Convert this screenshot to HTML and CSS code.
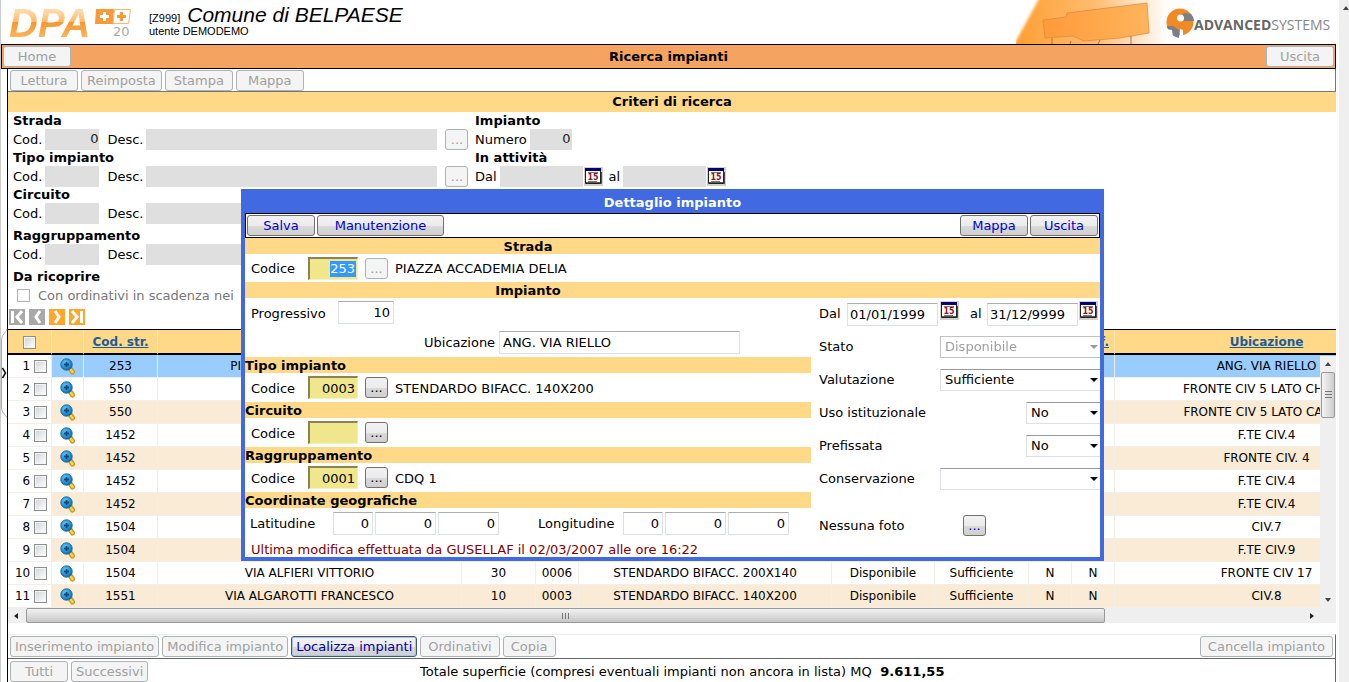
FILE: index.html
```html
<!DOCTYPE html>
<html lang="it">
<head>
<meta charset="utf-8">
<title>Ricerca impianti</title>
<link rel="stylesheet" href="styles.css">
</head>
<body>
<svg class="defs" aria-hidden="true">
  <defs>
    <radialGradient id="lens" cx=".4" cy=".35" r=".7"><stop offset="0" stop-color="#6cc6f0"/><stop offset=".6" stop-color="#2492d0"/><stop offset="1" stop-color="#0d5f9c"/></radialGradient>
    <symbol id="magnify" viewBox="0 0 16 17">
      <path d="M10.500 11l2 3" stroke="#c9971c" stroke-width="5" stroke-linecap="round"/>
      <path d="M11 12l1.500 2" stroke="#f2d35a" stroke-width="2.500" stroke-linecap="round"/>
      <circle cx="6.500" cy="6.500" r="5.700" fill="url(#lens)" stroke="#1b6fa8"/>
      <path d="M4 6.500h5M6.500 4v5" stroke="#0b4a80" stroke-width="1.800"/>
    </symbol>
    <symbol id="calendar" viewBox="0 0 19 19">
      <path d="M0 0h19v19H0z" fill="#d4d0c8"/>
      <path d="M1.500 1.500h15v15h-15z" fill="#fff" stroke="#222"/>
      <path d="M1 1h16v3H1z" fill="#00006e"/>
      <path d="M2 16h15V5" fill="none" stroke="#222" stroke-width="1.500"/>
      <path d="M4 5.500h10M4 14.500h9" stroke="#777"/>
      <text x="9" y="13" text-anchor="middle" font-family="DejaVu Sans, sans-serif" font-size="8" font-weight="bold" fill="#8b1a1a">15</text>
    </symbol>
  </defs>
</svg>

<div class="page">
  <div class="splitter" aria-hidden="true">
    <svg class="grip" width="8" height="90" viewBox="0 0 8 90"><path d="M7 0C6 4 1.500 5 1.500 12v66c0 6 4 7 5.500 11" fill="#fff" stroke="#aaa"/><path d="M2.500 39l3 5-3 5" fill="none" stroke="#111" stroke-width="1.500"/></svg>
  </div>

  <div class="main">
    <header class="brand">
      <div class="dpa">DPA</div>
      <svg class="flags" width="38" height="34" viewBox="0 0 38 34">
        <path d="M1 1h18l-1 15H0z" fill="#f79a3c"/>
        <path d="M19.500 1.500h16l-2 14H18z" fill="#fff" stroke="#f6b77a"/>
        <path d="M5 8.500h9M9.500 4v9" stroke="#fff" stroke-width="3"/>
        <path d="M22 8.500h9M26.500 4v9" stroke="#f79a3c" stroke-width="3"/>
        <text x="18" y="28" font-family="DejaVu Sans, sans-serif" font-size="13" fill="#aaa">20</text>
      </svg>
      <div class="who">
        <div><span class="small">[Z999]</span> <em>Comune di BELPAESE</em></div>
        <div class="small">utente DEMODEMO</div>
      </div>
      <svg class="banner" width="180" height="44" viewBox="0 0 180 44">
        <defs>
          <linearGradient id="sky"><stop offset="0" stop-color="#ff9d2e"/><stop offset=".45" stop-color="#ffbb70"/><stop offset=".85" stop-color="#fff"/></linearGradient>
          <linearGradient id="panel"><stop offset="0" stop-color="#ff9a3a"/><stop offset="1" stop-color="#ffb45c"/></linearGradient>
          <filter id="soft"><feGaussianBlur stdDeviation="1.500"/></filter>
        </defs>
        <path d="M25-5h155v55H-5z" fill="url(#sky)" filter="url(#soft)"/>
        <path d="M27 20l23-3 1-4 80-10 2 30-29 5-36 3-11-5-28 2z" fill="url(#panel)" stroke="#d8873c" stroke-width=".700"/>
        <path d="M36 38v6M55 41l-1 3M84 40l-2 4M115 36v8" stroke="#a87443"/>
      </svg>
      <svg class="mark" width="28" height="32" viewBox="0 0 28 32">
        <circle cx="14" cy="15" r="13.500" fill="#f08a24"/>
        <path d="M13 8c5-2 9-2 12-1 2 2 3 5 3 7H18z" fill="#7b7f86"/>
        <path d="M1 19h6l6 4v8C6 29 2 25 1 19z" fill="#7b7f86"/>
        <path d="M0 22l6 1 1 7-7 2z" fill="#fff"/>
        <circle cx="14.500" cy="11" r="3.500" fill="#fff"/>
        <path d="M14 22l3 1v9h-3z" fill="#fff"/>
      </svg>
      <div class="vendor"><b>ADVANCED</b>SYSTEMS</div>
    </header>

    <div class="titlebar">
      <button class="btn" disabled>Home</button>
      <h1>Ricerca impianti</h1>
      <button class="btn" disabled>Uscita</button>
    </div>

    <div class="content">
      <div class="toolbar">
        <button class="btn" disabled>Lettura</button>
        <button class="btn" disabled>Reimposta</button>
        <button class="btn" disabled>Stampa</button>
        <button class="btn" disabled>Mappa</button>
      </div>
      <h2 class="band">Criteri di ricerca</h2>

      <form class="criteria">
        <div class="crit-left">
          <fieldset>
            <legend>Strada</legend>
            <div class="line"><label for="c1">Cod.</label><input id="c1" class="w-cod num" value="0" disabled><label for="d1">Desc.</label><input id="d1" class="w-desc" disabled><button type="button" class="dots" disabled>...</button></div>
          </fieldset>
          <fieldset>
            <legend>Tipo impianto</legend>
            <div class="line"><label for="c2">Cod.</label><input id="c2" class="w-cod num" disabled><label for="d2">Desc.</label><input id="d2" class="w-desc" disabled><button type="button" class="dots" disabled>...</button></div>
          </fieldset>
          <fieldset>
            <legend>Circuito</legend>
            <div class="line"><label for="c3">Cod.</label><input id="c3" class="w-cod num" disabled><label for="d3">Desc.</label><input id="d3" class="w-desc" disabled></div>
          </fieldset>
          <fieldset class="spaced">
            <legend>Raggruppamento</legend>
            <div class="line"><label for="c4">Cod.</label><input id="c4" class="w-cod num" disabled><label for="d4">Desc.</label><input id="d4" class="w-desc" disabled></div>
          </fieldset>
          <fieldset class="spaced">
            <legend>Da ricoprire</legend>
            <div class="line"><label class="muted"><input type="checkbox" disabled>Con ordinativi in scadenza nei</label></div>
          </fieldset>
        </div>
        <div class="crit-right">
          <fieldset>
            <legend>Impianto</legend>
            <div class="line"><label for="n1">Numero</label><input id="n1" class="w-num num" value="0" disabled></div>
          </fieldset>
          <fieldset>
            <legend>In attività</legend>
            <div class="line"><label for="f1">Dal</label><input id="f1" class="w-date" disabled><svg class="cal"><use href="#calendar"/></svg><label for="f2">al</label><input id="f2" class="w-date" disabled><svg class="cal"><use href="#calendar"/></svg></div>
          </fieldset>
        </div>
      </form>

      <div class="pager">
        <button class="nav" aria-label="Prima pagina" disabled><svg width="16" height="16"><path d="M3.500 2v12M13 2L8 8l5 6" fill="none" stroke="#fff" stroke-width="3"/></svg></button>
        <button class="nav" aria-label="Pagina precedente" disabled><svg width="16" height="16"><path d="M11 2L7 8l4 6" fill="none" stroke="#fff" stroke-width="3"/></svg></button>
        <button class="nav" aria-label="Pagina successiva"><svg width="16" height="16"><path d="M6 2l4 6-4 6" fill="none" stroke="#fff" stroke-width="3"/></svg></button>
        <button class="nav" aria-label="Ultima pagina"><svg width="16" height="16"><path d="M12.500 2v12M3 2l5 6-5 6" fill="none" stroke="#fff" stroke-width="3"/></svg></button>
      </div>

      <div class="grid">
        <table>
          <colgroup><col class="k-n"><col class="k-i"><col class="k-c"><col class="k-v"><col class="k-c"><col class="k-s"><col class="k-t"><col class="k-d"><col class="k-e"><col class="k-s"><col class="k-s"><col class="k-v"></colgroup>
          <thead>
            <tr><th><input type="checkbox" aria-label="Seleziona tutti"></th><th></th><th><a href="#">Cod. str.</a></th><th></th><th></th><th></th><th></th><th></th><th></th><th></th><th><a href="#">Pref.</a></th><th><a href="#">Ubicazione</a></th></tr>
          </thead>
          <tbody>
            <tr class="selected"><td><label>1 <input type="checkbox"></label></td><td><svg class="mag"><use href="#magnify"/></svg></td><td>253</td><td>PIAZZA ACCADEMIA DELIA</td><td>10</td><td>0003</td><td>STENDARDO BIFACC. 140X200</td><td>Disponibile</td><td>Sufficiente</td><td>N</td><td>N</td><td>ANG. VIA RIELLO</td></tr>
            <tr><td><label>2 <input type="checkbox"></label></td><td><svg class="mag"><use href="#magnify"/></svg></td><td>550</td><td></td><td></td><td></td><td></td><td></td><td></td><td></td><td></td><td>FRONTE CIV 5 LATO CHIESA</td></tr>
            <tr><td><label>3 <input type="checkbox"></label></td><td><svg class="mag"><use href="#magnify"/></svg></td><td>550</td><td></td><td></td><td></td><td></td><td></td><td></td><td></td><td></td><td>FRONTE CIV 5 LATO CAMPO</td></tr>
            <tr><td><label>4 <input type="checkbox"></label></td><td><svg class="mag"><use href="#magnify"/></svg></td><td>1452</td><td></td><td></td><td></td><td></td><td></td><td></td><td></td><td></td><td>F.TE CIV.4</td></tr>
            <tr><td><label>5 <input type="checkbox"></label></td><td><svg class="mag"><use href="#magnify"/></svg></td><td>1452</td><td></td><td></td><td></td><td></td><td></td><td></td><td></td><td></td><td>FRONTE CIV. 4</td></tr>
            <tr><td><label>6 <input type="checkbox"></label></td><td><svg class="mag"><use href="#magnify"/></svg></td><td>1452</td><td></td><td></td><td></td><td></td><td></td><td></td><td></td><td></td><td>F.TE CIV.4</td></tr>
            <tr><td><label>7 <input type="checkbox"></label></td><td><svg class="mag"><use href="#magnify"/></svg></td><td>1452</td><td></td><td></td><td></td><td></td><td></td><td></td><td></td><td></td><td>F.TE CIV.4</td></tr>
            <tr><td><label>8 <input type="checkbox"></label></td><td><svg class="mag"><use href="#magnify"/></svg></td><td>1504</td><td></td><td></td><td></td><td></td><td></td><td></td><td></td><td></td><td>CIV.7</td></tr>
            <tr><td><label>9 <input type="checkbox"></label></td><td><svg class="mag"><use href="#magnify"/></svg></td><td>1504</td><td></td><td></td><td></td><td></td><td></td><td></td><td></td><td></td><td>F.TE CIV.9</td></tr>
            <tr><td><label>10 <input type="checkbox"></label></td><td><svg class="mag"><use href="#magnify"/></svg></td><td>1504</td><td>VIA ALFIERI VITTORIO</td><td>30</td><td>0006</td><td>STENDARDO BIFACC. 200X140</td><td>Disponibile</td><td>Sufficiente</td><td>N</td><td>N</td><td>FRONTE CIV 17</td></tr>
            <tr><td><label>11 <input type="checkbox"></label></td><td><svg class="mag"><use href="#magnify"/></svg></td><td>1551</td><td>VIA ALGAROTTI FRANCESCO</td><td>10</td><td>0003</td><td>STENDARDO BIFACC. 140X200</td><td>Disponibile</td><td>Sufficiente</td><td>N</td><td>N</td><td>CIV.8</td></tr>
          </tbody>
        </table>
        <div class="vscroll" aria-hidden="true"><i class="up"></i><b></b><i class="down"></i></div>
      </div>
      <div class="hscroll" aria-hidden="true"><i class="left"></i><b></b><i class="right"></i></div>

      <div class="actions">
        <button class="btn tight" disabled>Inserimento impianto</button>
        <button class="btn tight" disabled>Modifica impianto</button>
        <button class="btn tight focus">Localizza impianti</button>
        <button class="btn snug" disabled>Ordinativi</button>
        <button class="btn snug" disabled>Copia</button>
        <button class="btn snug last" disabled>Cancella impianto</button>
      </div>
      <div class="footer">
        <div class="more"><button class="btn mid" disabled>Tutti</button><button class="btn tight" disabled>Successivi</button></div>
        <div>Totale superficie (compresi eventuali impianti non ancora in lista) MQ <b>&nbsp;9.611,55</b></div>
      </div>
    </div>
  </div>
  <div class="pagescroll" aria-hidden="true"><i class="up"></i></div>
</div>

<section class="dialog" role="dialog" aria-labelledby="dt">
  <h2 id="dt">Dettaglio impianto</h2>
  <div class="dlg-tools">
    <button class="btn">Salva</button>
    <button class="btn wide">Manutenzione</button>
    <button class="btn last">Mappa</button>
    <button class="btn">Uscita</button>
  </div>
  <h3 class="center"><span>Strada</span></h3>
  <div class="code"><label for="s1">Codice</label><input id="s1" class="khaki selected" value="253"><button class="dots" disabled>...</button><span>PIAZZA ACCADEMIA DELIA</span></div>
  <h3 class="center"><span>Impianto</span></h3>
  <div class="cols">
    <div class="col-left">
      <div class="code"><label for="p1" class="prog">Progressivo</label><input id="p1" class="box w-prog num" value="10"></div>
      <div class="code ubi"><label for="u1">Ubicazione</label><input id="u1" class="box w-ubi" value="ANG. VIA RIELLO"></div>
      <h3>Tipo impianto</h3>
      <div class="code"><label for="s2">Codice</label><input id="s2" class="khaki" value="0003"><button class="dots">...</button><span>STENDARDO BIFACC. 140X200</span></div>
      <h3>Circuito</h3>
      <div class="code"><label for="s3">Codice</label><input id="s3" class="khaki"><button class="dots">...</button></div>
      <h3>Raggruppamento</h3>
      <div class="code"><label for="s4">Codice</label><input id="s4" class="khaki" value="0001"><button class="dots">...</button><span>CDQ 1</span></div>
      <h3>Coordinate geografiche</h3>
      <div class="coords"><label for="la">Latitudine</label><input id="la" class="box deg" value="0"><input aria-label="Latitudine primi" class="box" value="0"><input aria-label="Latitudine secondi" class="box" value="0"><label for="lo" class="lon">Longitudine</label><input id="lo" class="box deg" value="0"><input aria-label="Longitudine primi" class="box" value="0"><input aria-label="Longitudine secondi" class="box" value="0"></div>
      <p class="modified">Ultima modifica effettuata da GUSELLAF il 02/03/2007 alle ore 16:22</p>
    </div>
    <div class="col-right">
      <div class="dates"><label for="g1">Dal</label><input id="g1" class="box w-day" value="01/01/1999"><svg class="cal"><use href="#calendar"/></svg><label for="g2" class="to">al</label><input id="g2" class="box w-day" value="31/12/9999"><svg class="cal"><use href="#calendar"/></svg></div>
      <div class="opt"><label for="o1">Stato</label><span class="sel off"><select id="o1" disabled><option>Disponibile</option></select></span></div>
      <div class="opt"><label for="o2">Valutazione</label><span class="sel"><select id="o2"><option>Sufficiente</option></select></span></div>
      <div class="opt"><label for="o3">Uso istituzionale</label><span class="sel short"><select id="o3"><option>No</option></select></span></div>
      <div class="opt"><label for="o4">Prefissata</label><span class="sel short"><select id="o4"><option>No</option></select></span></div>
      <div class="opt"><label for="o5">Conservazione</label><span class="sel"><select id="o5"><option></option></select></span></div>
      <div class="opt photo"><span class="caption">Nessuna foto</span><button class="dots blue" aria-label="Foto">...</button></div>
    </div>
  </div>
</section>
</body>
</html>
```
FILE: styles.css
```css
* { box-sizing: border-box; }
body {
  margin: 0;
  height: 100vh;
  overflow: hidden;
  position: relative;
  background: #fff;
  color: #000;
  font: 13px/16px "DejaVu Sans", Verdana, sans-serif;
}
h1, h2, h3, p, fieldset, legend { margin: 0; padding: 0; border: 0; font-size: 13px; }
input, button, select { margin: 0; font: inherit; color: inherit; }
.defs { position: absolute; width: 0; height: 0; }
.num { text-align: right; }

.page { display: flex; height: 100%; }
.splitter {
  position: relative;
  flex: none;
  width: 1px;
  background: #ccc;
}
.grip { position: absolute; top: 329px; left: 0; z-index: 1; }
.main { flex: 1; min-width: 0; }
.pagescroll {
  flex: none;
  width: 10px;
  margin-left: 3px;
  padding: 6px 0 0 4px;
  background: #efefef;
}

/* Header */
.brand { position: relative; display: flex; height: 44px; padding-left: 8px; }
.dpa {
  width: 86px;
  font: italic bold 40px/46px "Liberation Sans", Arial, sans-serif;
  color: transparent;
  background: linear-gradient(#ffd9a8 25%, #fcb968 50%, #f7962e 51%, #fbb560 85%);
  -webkit-background-clip: text;
  background-clip: text;
}
.flags { margin-top: 8px; }
.who { margin-left: 16px; padding-top: 4px; font: 11px/14px "Liberation Sans", Arial, sans-serif; }
.who > div { height: 19px; line-height: 22px; white-space: nowrap; }
.who > .small { height: 14px; line-height: 16px; }
.who em { font-size: 21px; margin-left: 4px; }
.banner { margin-left: auto; }
.mark { margin: 7px 0 0 -30px; z-index: 1; }
.vendor {
  width: 142px;
  padding-right: 6px;
  white-space: nowrap;
  font: 14px/49px "Open Sans", sans-serif;
  color: #888;
}
.vendor b { color: #666; }

.titlebar {
  display: flex;
  align-items: center;
  justify-content: space-between;
  height: 25px;
  padding: 0 1px;
  border: 1px solid #000;
  background: #f4a460;
}

/* Buttons */
.btn {
  height: 21px;
  min-width: 68px;
  padding: 0 5px;
  border: 1px solid #707070;
  border-radius: 3px;
  background: linear-gradient(#f2f2f2, #ebebeb 50%, #dadada 51%, #cfcfcf);
  color: #0000cd;
  line-height: 19px;
  white-space: nowrap;
}
.btn:disabled { border-color: #adb2b5; background: #f4f4f4; color: #a0a0a0; }
.btn.tight { min-width: 0; padding: 0 4px; }
.btn.snug { min-width: 0; padding: 0 7px; }
.btn.mid { min-width: 58px; }
.btn.wide { min-width: 127px; }
.btn.focus { border-color: #3c5a80; color: #0000a0; box-shadow: inset 0 0 0 1px #b0c4de; }
.last { margin-left: auto; }
.dots {
  width: 23px;
  height: 21px;
  padding: 0;
  border: 1px solid #707070;
  border-radius: 3px;
  background: linear-gradient(#f2f2f2, #ebebeb 50%, #dadada 51%, #cfcfcf);
  line-height: 19px;
}
.dots:disabled { border-color: #adb2b5; background: #f4f4f4; color: #a0a0a0; }
.dots.blue { color: #0000cd; }

.content { margin-left: 6px; border-left: 1px solid #000; }
.toolbar {
  display: flex;
  align-items: center;
  gap: 3px;
  height: 23px;
  padding: 0 2px;
  border-right: 1px solid #777;
  border-bottom: 1px solid #777;
}
.band { background: #ffd987; line-height: 20px; text-align: center; }

/* Search criteria */
.criteria { display: flex; height: 192px; padding: 1px 0 0 5px; }
.crit-left { width: 462px; }
.spaced { margin-top: 4px; }
legend { display: block; font-weight: bold; }
.line { display: flex; align-items: center; height: 21px; gap: 8px; }
.line label + input { margin-left: -5px; }
.line input:not([type="checkbox"]) { height: 21px; padding: 0 1px 3px; border: 0; background: #dfdfdf; color: #222; }
.w-cod { width: 54px; }
.w-desc { width: 291px; }
.w-num { width: 42px; }
.w-date { width: 83px; }
.cal { width: 19px; height: 19px; flex: none; }
.line .cal { margin: 0 -2px 0 -7px; }
.muted { display: flex; align-items: center; gap: 8px; padding-left: 4px; color: #777; }
input[type="checkbox"] {
  appearance: none;
  width: 13px;
  height: 13px;
  border: 1px solid #8e8f8f;
  background: linear-gradient(135deg, #cfd3d8, #fff);
  box-shadow: inset 0 0 0 1px #f4f4f4;
  vertical-align: middle;
}
input[type="checkbox"]:disabled { border-color: #b5b5b5; background: #fff; }

.pager { display: flex; gap: 4px; height: 25px; padding: 5px 0 0 1px; }
.nav { width: 16px; height: 16px; padding: 0; border: 0; background: #ffa62b; }
.nav:disabled { background: #a9a9a9; }
.nav svg { display: block; }

/* Results */
.grid { position: relative; overflow: hidden; border-top: 1px solid #000; }
table { table-layout: fixed; width: 1411px; border-collapse: separate; border-spacing: 0; font-size: 12px; line-height: 16px; }
.k-n { width: 44px; } .k-i { width: 32px; } .k-c { width: 74px; } .k-v { width: 304px; }
.k-s { width: 43px; } .k-t { width: 253px; } .k-d { width: 103px; } .k-e { width: 94px; }
th, td { padding: 0; text-align: center; white-space: nowrap; border-right: 1px solid #f3eee6; }
th { height: 25px; border-right-color: #ffe7b4; border-bottom: 2px solid #000; background: #ffd987; }
th a { color: #1c5c9c; }
td { height: 23px; border-bottom: 1px solid #f3eee6; }
tbody tr:nth-child(odd) { background: #faebd7; }
tbody tr.selected { background: #99ccff; }
td:first-child { padding-right: 4px; background: #fff; text-align: right; }
.mag { display: block; width: 16px; height: 17px; margin: 0 auto; }
.vscroll {
  position: absolute;
  top: 26px;
  right: 0;
  bottom: 0;
  display: flex;
  flex-direction: column;
  align-items: center;
  justify-content: space-between;
  width: 16px;
  padding: 6px 0;
  background: #efefef;
}
.vscroll b {
  width: 14px;
  height: 46px;
  margin: 6px 0 auto;
  border: 1px solid #999;
  border-radius: 2px;
  background: repeating-linear-gradient(#777 0 1px, transparent 1px 3px) center / 7px 8px no-repeat, linear-gradient(90deg, #f5f5f5, #ccc);
}
.hscroll { display: flex; align-items: center; height: 15px; padding: 0 22px 0 6px; background: #efefef; }
.hscroll b {
  width: 83%;
  height: 15px;
  margin: 0 auto 0 8px;
  border: 1px solid #999;
  border-radius: 2px;
  background: repeating-linear-gradient(90deg, #777 0 1px, transparent 1px 3px) center / 8px 6px no-repeat, linear-gradient(#f2f2f2, #ddd 50%, #c6c6c6);
}
.up, .down { display: block; width: 0; border: 3px solid transparent; }
.up { border-top: 0; border-bottom: 4px solid #444; }
.down { border-bottom: 0; border-top: 4px solid #444; }
.left, .right { width: 0; border: 3px solid transparent; }
.left { border-left: 0; border-right: 4px solid #222; }
.right { border-right: 0; border-left: 4px solid #222; }

.actions {
  display: flex;
  align-items: center;
  gap: 3px;
  height: 25px;
  margin-top: 11px;
  padding: 0 2px;
  border: 1px solid #eee;
  border-width: 1px 1px 1px 0;
  border-right-color: #666;
  border-bottom-color: #666;
}
.footer {
  display: grid;
  grid-template-columns: 412px 1fr;
  align-items: center;
  height: 25px;
  border-right: 1px solid #666;
}
.more { display: flex; gap: 3px; padding-left: 2px; }

/* Detail window */
.dialog {
  position: absolute;
  top: 189px;
  left: 241px;
  right: 245px;
  border: 4px solid #4169e1;
  background: #fff;
}
.dialog h2 { background: #4169e1; color: #fff; line-height: 20px; text-align: center; }
.dlg-tools {
  display: flex;
  align-items: center;
  gap: 2px;
  height: 25px;
  padding: 0 1px;
  border: 1px solid #000;
}
.dialog h3 { height: 16px; background: #ffd987; line-height: 18px; }
.center span { display: block; width: 566px; text-align: center; }
.code { display: flex; align-items: center; height: 29px; padding-left: 6px; line-height: 18px; }
.dialog > .code { height: 28px; }
.code label { width: 57px; }
.code .dots { margin: 0 7px; }
.code label, .code span { padding-top: 2px; }
.khaki {
  width: 50px;
  height: 23px;
  padding: 0 2px;
  border: 1px solid #f5f0c0;
  border-width: 2px 1px 1px 2px;
  border-top-color: #8a8450;
  border-left-color: #8a8450;
  background: #f0e68c;
  text-align: right;
}
.khaki.selected {
  color: #fff;
  background: linear-gradient(#3399ff, #3399ff) right 1px center / 26px 16px no-repeat, #f0e68c;
}
.box { height: 23px; padding: 0 3px; border: 1px solid #dde0e8; border-top-color: #abadb3; background: #fff; }
.code .prog { width: 87px; }
.w-prog { width: 56px; }
.w-ubi { width: 241px; }
.ubi { height: 30px; padding-left: 179px; }
.code.ubi label { width: 75px; }
.cols { display: flex; }
.col-left { width: 566px; }
.col-right { flex: 1; min-width: 0; padding-left: 8px; }
.coords { display: flex; align-items: center; gap: 2px; height: 31px; padding-left: 5px; }
.coords label { width: 81px; }
.coords .lon { width: 83px; margin-left: 37px; }
.coords .box { width: 61px; text-align: right; }
.coords .deg { width: 40px; }
.modified { height: 18px; padding-left: 6px; line-height: 22px; color: #800000; }
.dates, .opt { display: flex; align-items: center; height: 33px; }
.dates { height: 32px; }
.dates label { width: 28px; }
.dates .to { width: 17px; margin-left: 11px; }
.dates .cal { margin: 0 0 8px 2px; }
.dates .cal:last-child { margin-left: 1px; }
.w-day { width: 91px; padding: 0 2px; }
.opt label { width: 121px; }
.sel { position: relative; flex: 1; }
.sel.short { margin-left: 86px; }
.sel select {
  appearance: none;
  display: block;
  width: 100%;
  height: 22px;
  padding: 0 4px;
  border: 1px solid #dde0e8;
  border-top-color: #999;
  border-right: 0;
  background: #fff;
  color: #000;
}
.sel.off select { border-color: #aaa; color: #777; }
.sel::after {
  content: "";
  position: absolute;
  top: 9px;
  right: 2px;
  border: 4px solid transparent;
  border-top-color: #000;
  border-bottom: 0;
}
.sel.off::after { border-top-color: #999; }
.photo { margin-top: 14px; }
.caption { width: 144px; }
```
